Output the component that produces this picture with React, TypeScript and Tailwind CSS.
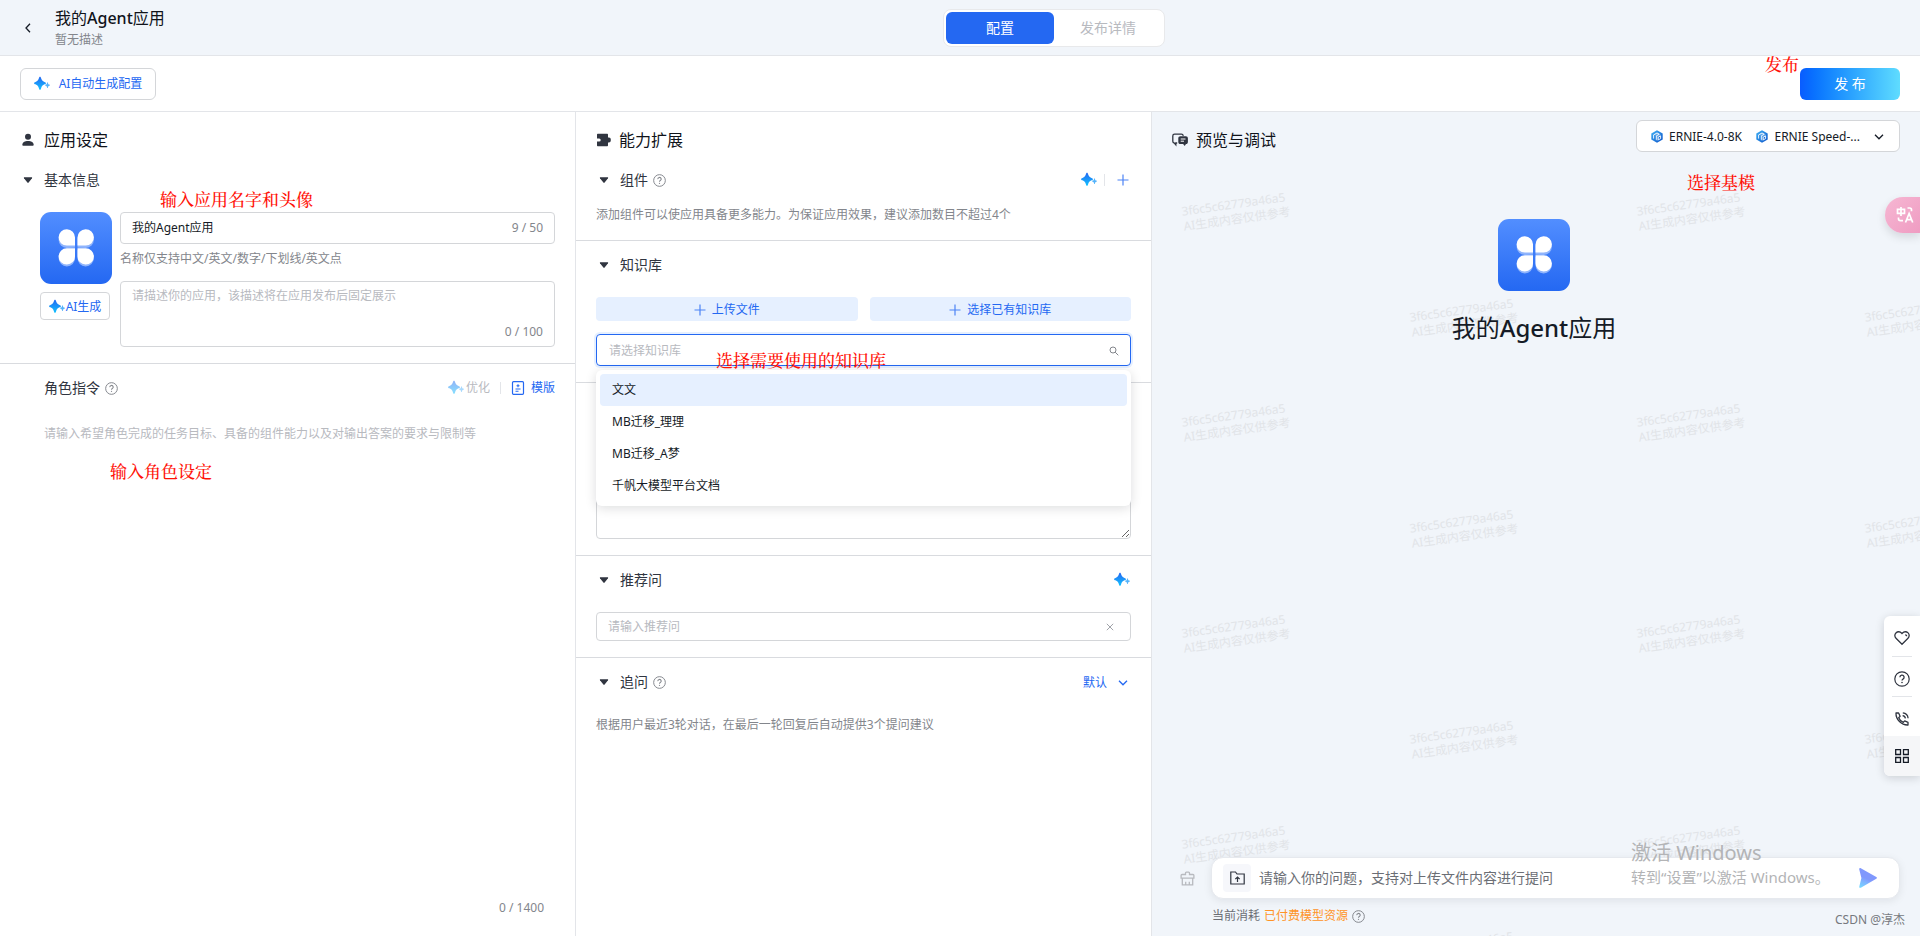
import React from "react";

function Sparkle({ className = "" }: { className?: string }) {
  return (
    <svg viewBox="0 0 16 16" className={"size-4 shrink-0 " + className} aria-hidden="true">
      <defs>
        <linearGradient id="spark" x1="0" y1="0" x2="0" y2="1">
          <stop offset="0" stopColor="#2468f2" />
          <stop offset="1" stopColor="#12c2ff" />
        </linearGradient>
      </defs>
      <path
        d="M6 .8c.6 0 .8.500 1.100 1.500.7 2.100 1.400 2.900 3.400 3.700.8.3 1.400.6 1.400 1.200s-.6.800-1.400 1.100c-2 .8-2.700 1.700-3.400 3.900-.3 1-.5 1.600-1.100 1.600s-.8-.6-1.100-1.600C4.200 10 3.500 9.100 1.500 8.300.7 8 .1 7.800.1 7.200S.7 6.300 1.500 6c2-.8 2.700-1.600 3.400-3.700C5.200 1.300 5.400.8 6 .8z"
        fill="url(#spark)"
      />
      <path
        d="M13.500 6.300c.3 0 .4.400.5.9.2.8.5 1.100 1.200 1.400.5.200.8.3.8.600s-.3.400-.8.600c-.7.300-1 .6-1.200 1.400-.1.500-.2.900-.5.900s-.4-.4-.5-.9c-.2-.8-.5-1.100-1.200-1.400-.5-.2-.8-.3-.8-.6s.3-.4.8-.6c.7-.3 1-.6 1.200-1.400.1-.5.2-.9.5-.9z"
        fill="#55b4fb"
      />
    </svg>
  );
}

function Help({ className = "size-3 text-[#83868c]" }: { className?: string }) {
  return (
    <svg viewBox="0 0 16 16" className={"shrink-0 " + className} fill="none" stroke="currentColor" aria-hidden="true">
      <circle cx="8" cy="8" r="7.2" strokeWidth="1.2" />
      <path d="M5.900 6.300a2.100 2.100 0 1 1 3.100 1.800c-.7.400-1 .8-1 1.500" strokeWidth="1.300" />
      <circle cx="8" cy="11.500" r=".8" fill="currentColor" stroke="none" />
    </svg>
  );
}

function Caret() {
  return (
    <svg viewBox="0 0 10 8" className="h-2 w-2.5 shrink-0" aria-hidden="true">
      <path d="M1.400 1.300h7.200c.5 0 .7.500.4.900L5.600 6.600a.8.8 0 0 1-1.200 0L1 2.200c-.3-.4-.1-.9.4-.9z" fill="#303540" />
    </svg>
  );
}

function Chevron({ className }: { className: string }) {
  return (
    <svg viewBox="0 0 10 6" className={"shrink-0 " + className} fill="none" stroke="currentColor" strokeWidth="1.300" aria-hidden="true">
      <path d="M1 .8l4 4 4-4" />
    </svg>
  );
}

function Plus({ className }: { className: string }) {
  return (
    <svg viewBox="0 0 12 12" className={"shrink-0 " + className} stroke="#4d84f5" strokeWidth="1.200" aria-hidden="true">
      <path d="M6 .5v11M.5 6h11" />
    </svg>
  );
}

function Clover({ id }: { id: string }) {
  return (
    <svg viewBox="0 0 72 72" className="size-[72px] shrink-0" role="img" aria-label="Agent">
      <defs>
        <linearGradient id={id} x1="0" y1="0" x2="0" y2="1">
          <stop offset="0" stopColor="#528eff" />
          <stop offset="1" stopColor="#2468f2" />
        </linearGradient>
      </defs>
      <rect width="72" height="72" rx="11" fill={`url(#${id})`} />
      <g fill="#8fb4fc" transform="translate(0 1.800)">
        <path d="M35 34V26a8.200 8.200 0 1 0-8.200 8.200z" />
        <path d="M37.500 34V26a8.200 8.200 0 1 1 8.200 8.200z" />
        <path d="M35 36.200v8a8.200 8.200 0 1 1-8.200-8z" />
        <path d="M37.500 36.200v8a8.200 8.200 0 1 0 8.200-8z" />
      </g>
      <g fill="#fff">
        <path d="M35 33.600V25.600a8.200 8.200 0 1 0-8.200 8z" />
        <path d="M37.500 33.600V25.600a8.200 8.200 0 1 1 8.200 8z" />
        <path d="M35 36.200v8a8.200 8.200 0 1 1-8.200-8z" />
        <path d="M37.500 36.200v8a8.200 8.200 0 1 0 8.200-8z" />
      </g>
    </svg>
  );
}

function ModelLogo() {
  return (
    <svg viewBox="0 0 12 13" className="h-[13px] w-3 shrink-0" aria-hidden="true">
      <defs>
        <linearGradient id="model" x1="0" y1="0" x2="1" y2="1">
          <stop offset="0" stopColor="#3fb2f5" />
          <stop offset="1" stopColor="#0b52c9" />
        </linearGradient>
      </defs>
      <path d="M6 .3l5.700 3.200v6L6 12.700.3 9.500v-6z" fill="url(#model)" />
      <path d="M6 2.400l3.700 2.100v1L7.200 6.900v3.600L6 11.100 5.200 10.600V6L2.500 4.500z" fill="#fff" opacity=".25" />
      <path d="M2.600 8.600V4.900L6 3l2.300 1.200L5.300 5.900v3.900M9.600 5.900v2.700L7.200 9.900V7.200z" fill="none" stroke="#fff" strokeWidth=".9" />
    </svg>
  );
}

const note = "pointer-events-none absolute z-20 whitespace-nowrap text-[17px] font-medium leading-6 text-[#ff1208] [font-family:'Liberation_Serif','Noto_Serif_CJK_SC','Noto_Sans_CJK_SC',serif]";
const sectionTitle = "text-sm text-[#303540]";

function Watermarks() {
  return (
    <div className="pointer-events-none absolute inset-0 overflow-hidden select-none" aria-hidden="true">
      <div className="grid auto-rows-[211px] grid-cols-[455px_455px] pt-[84px] pl-[30px]">
        {[0, 1, 2, 3, 4, 5, 6, 7].map((cell) => (
          <div key={cell} className="flex flex-col justify-between pb-[75px]">
            {["", "ml-[228px]"].map((shift) => (
              <div key={shift} className={"w-28 origin-center -rotate-8 text-xs leading-[15px] whitespace-nowrap text-[#e1e4e8] " + shift}>
                3f6c5c62779a46a5
                <br />
                AI生成内容仅供参考
              </div>
            ))}
          </div>
        ))}
      </div>
    </div>
  );
}

function SettingsColumn() {
  return (
    <section className="flex w-[30%] flex-col border-r border-[#e3e5e9]">
      <div className="border-b border-[#d9dbdf] px-5 py-4">
        <h2 className="flex h-6 items-center gap-2 text-base text-[#10131a]">
          <svg viewBox="0 0 16 16" className="size-4" fill="#303540" aria-hidden="true">
            <circle cx="8" cy="4.700" r="3" />
            <path d="M2.300 12.800C2.300 10.300 4.800 9 8 9s5.700 1.300 5.700 3.800c0 .6-.3.900-.9.900H3.200c-.6 0-.9-.3-.9-.9z" />
          </svg>
          应用设定
        </h2>
        <div className="relative mt-4 flex h-6 items-center gap-[11px] pl-[3px]">
          <Caret />
          <h3 className={sectionTitle}>基本信息</h3>
          <span className={note + " top-[21px] left-[140px]"}>输入应用名字和头像</span>
        </div>
        <div className="mt-5 flex gap-2 pl-5">
          <div>
            <Clover id="cloverA" />
            <button className="mt-2 flex h-7 w-[70px] items-center justify-center gap-px rounded border border-[#d4d6d9] bg-white pt-px text-xs text-[#2468f2]">
              <Sparkle />
              <span>AI生成</span>
            </button>
          </div>
          <div className="min-w-0 flex-1">
            <div className="flex h-8 items-center rounded border border-[#d4d6d9] px-[11px] text-xs">
              <input aria-label="应用名字" defaultValue="我的Agent应用" className="min-w-0 flex-1 text-[#151b26] outline-none" />
              <span className="text-[#83868c]">9 / 50</span>
            </div>
            <p className="mt-[5px] h-5 text-xs leading-5 text-[#83868c]">名称仅支持中文/英文/数字/下划线/英文点</p>
            <div className="mt-3 flex h-[66px] flex-col rounded border border-[#d4d6d9] px-[11px] py-1 text-xs">
              <textarea
                aria-label="应用描述"
                placeholder="请描述你的应用，该描述将在应用发布后固定展示"
                className="min-h-0 flex-1 resize-none leading-5 outline-none placeholder:text-[#b8babf]"
              />
              <span className="text-right leading-5 text-[#83868c]">0 / 100</span>
            </div>
          </div>
        </div>
      </div>
      <div className="relative flex flex-1 flex-col px-5 pt-3 pb-4">
        <div className="flex h-6 items-center pl-6">
          <h3 className={sectionTitle}>角色指令</h3>
          <Help className="ml-[5px] size-[13px] text-[#83868c]" />
          <button disabled className="ml-auto flex items-center gap-0.5 text-xs text-[#b8babf]">
            <Sparkle className="opacity-50" />
            优化
          </button>
          <span className="mx-[10px] h-3 w-px bg-[#e3e5e9]" />
          <button className="flex items-center gap-[6px] text-xs text-[#2468f2]">
            <svg viewBox="0 0 14 14" className="size-3.5" fill="none" stroke="#2468f2" aria-hidden="true">
              <rect x="1.500" y=".7" width="11" height="12.600" rx="1" strokeWidth="1.200" />
              <path d="M7 3.200v3M5.500 4.700h3M4.500 8h5M4.500 10.300h3" strokeWidth="1.100" />
            </svg>
            模版
          </button>
        </div>
        <textarea
          aria-label="角色指令"
          placeholder="请输入希望角色完成的任务目标、具备的组件能力以及对输出答案的要求与限制等"
          className="mt-[22px] ml-6 flex-1 resize-none text-xs leading-6 outline-none placeholder:text-[#b8babf]"
        />
        <span className={note + " top-[97px] left-[110px]"}>输入角色设定</span>
        <span className="pr-[11px] text-right text-xs leading-6 text-[#83868c]">0 / 1400</span>
      </div>
    </section>
  );
}

function KnowledgeSelect() {
  const options = ["文文", "MB迁移_理理", "MB迁移_A梦", "千帆大模型平台文档"];
  return (
    <div className="relative mt-[13px]">
      <div className="flex h-8 items-center rounded border border-[#2468f2] pt-px pr-[11px] pl-3 ring-2 ring-[#e6f0ff]">
        <input
          role="combobox"
          aria-expanded="true"
          aria-controls="kb-list"
          aria-label="知识库"
          placeholder="请选择知识库"
          className="min-w-0 flex-1 text-xs outline-none placeholder:text-[#b8babf]"
        />
        <svg viewBox="0 0 10 10" className="size-2.5" fill="none" stroke="#83868c" aria-hidden="true">
          <circle cx="4" cy="4" r="3" />
          <path d="M6.200 6.200L9.300 9.300" />
        </svg>
      </div>
      <span className={note + " top-4 left-[120px]"}>选择需要使用的知识库</span>
      <ul
        id="kb-list"
        role="listbox"
        className="absolute inset-x-0 top-full z-10 mt-1 rounded-md bg-white p-1 shadow-[0_2px_12px_rgba(7,12,20,0.14)]"
      >
        {options.map((name, i) => (
          <li
            key={name}
            role="option"
            aria-selected={i === 0}
            className={"flex h-8 items-center rounded px-3 text-xs text-[#151b26] " + (i === 0 ? "bg-[#e6f0ff]" : "")}
          >
            {name}
          </li>
        ))}
      </ul>
    </div>
  );
}

function AbilityColumn() {
  const add = "flex h-6 flex-1 items-center justify-center gap-[6px] rounded bg-[#e6f0ff] pt-px text-xs text-[#2468f2]";
  return (
    <section className="w-[30%] border-r border-[#e3e5e9]">
      <div className="border-b border-[#d9dbdf] px-5 py-4">
        <h2 className="flex h-6 items-center gap-2 text-base text-[#10131a]">
          <svg viewBox="0 0 15 14" className="h-3.5 w-[15px]" aria-hidden="true">
            <path
              d="M2 .8h9c.6 0 1 .4 1 1v2.700h.9A1.900 1.900 0 0 1 14.800 6.500v1A1.900 1.900 0 0 1 12.900 9.400H12v2.800c0 .6-.4 1-1 1H2c-.6 0-1-.4-1-1V8.500h2.200a1.500 1.500 0 0 0 0-3H1V1.800c0-.6.4-1 1-1z"
              fill="#303540"
            />
          </svg>
          能力扩展
        </h2>
        <div className="mt-4 flex h-6 items-center pl-[3px]">
          <Caret />
          <h3 className={sectionTitle + " mr-[5px] ml-[11px]"}>组件</h3>
          <Help className="size-[13px] text-[#83868c]" />
          <button aria-label="AI" className="ml-auto">
            <Sparkle />
          </button>
          <span className="mr-3 ml-[7px] h-3 w-px bg-[#e3e5e9]" />
          <button aria-label="添加组件" className="mr-0.5">
            <Plus className="size-3" />
          </button>
        </div>
        <p className="mt-[13px] h-[19px] text-xs leading-5 text-[#83868c]">添加组件可以使应用具备更多能力。为保证应用效果，建议添加数目不超过4个</p>
      </div>
      <div className="border-b border-[#d9dbdf] px-5 pt-3 pb-4">
        <div className="flex h-6 items-center gap-[11px] pl-[3px]">
          <Caret />
          <h3 className={sectionTitle}>知识库</h3>
        </div>
        <div className="mt-5 flex gap-3">
          <button className={add}>
            <Plus className="size-3" />
            上传文件
          </button>
          <button className={add}>
            <Plus className="size-3" />
            选择已有知识库
          </button>
        </div>
        <KnowledgeSelect />
      </div>
      <div className="border-b border-[#d9dbdf] px-5 pt-14 pb-4">
        <textarea aria-label="开场白" className="block h-[100px] w-full resize-y rounded border border-[#d4d6d9] px-[11px] py-1 text-xs outline-none" />
      </div>
      <div className="border-b border-[#d9dbdf] px-5 pt-3 pb-4">
        <div className="flex h-6 items-center gap-[11px] pl-[3px]">
          <Caret />
          <h3 className={sectionTitle}>推荐问</h3>
          <button aria-label="AI" className="mr-px ml-auto">
            <Sparkle />
          </button>
        </div>
        <div className="mt-5 flex h-[29px] items-center rounded border border-[#d4d6d9] pr-4 pl-[11px]">
          <input aria-label="推荐问" placeholder="请输入推荐问" className="min-w-0 flex-1 text-xs outline-none placeholder:text-[#b8babf]" />
          <button aria-label="清除">
            <svg viewBox="0 0 8 8" className="size-2" stroke="#a0a3a9" aria-hidden="true">
              <path d="M.8.8l6.400 6.400M7.200.8L.8 7.200" />
            </svg>
          </button>
        </div>
      </div>
      <div className="px-5 pt-3">
        <div className="flex h-6 items-center pl-[3px]">
          <Caret />
          <h3 className={sectionTitle + " mr-[5px] ml-[11px]"}>追问</h3>
          <Help className="size-[13px] text-[#83868c]" />
          <button className="mr-[3px] ml-auto flex items-center gap-[11px] pt-px text-xs text-[#2468f2]">
            默认
            <Chevron className="h-[6px] w-2.5" />
          </button>
        </div>
        <p className="mt-[21px] h-5 text-xs leading-5 text-[#83868c]">根据用户最近3轮对话，在最后一轮回复后自动提供3个提问建议</p>
      </div>
    </section>
  );
}

function PreviewColumn() {
  return (
    <section className="relative flex min-w-0 flex-1 flex-col bg-[#f1f5fa] px-5">
      <Watermarks />
      <div className="relative flex items-start justify-between pt-2">
        <h2 className="mt-2 flex h-6 items-center gap-2 text-base text-[#10131a]">
          <svg viewBox="0 0 16 14" className="h-3.5 w-4" aria-hidden="true">
            <path d="M11.300 2.800c-.2-1-.8-1.600-1.900-1.600H2.600C1.500 1.200.8 1.900.8 3v5.200c0 1.100.6 1.700 1.500 1.800l1.500 1.800V10h1.400" fill="none" stroke="#303540" strokeWidth="1.300" />
            <path d="M8.400 3.200h5.400c1.300 0 2.100.8 2.100 2.100v3.600c0 1.200-.7 2-1.900 2.100l-1.300 2-1.600-2H8.400c-1.300 0-2.100-.8-2.100-2.100V5.300c0-1.300.8-2.100 2.100-2.100z" fill="#303540" />
            <path d="M8.700 6h4.800M8.700 8.200h3.300" stroke="#fff" />
          </svg>
          预览与调试
        </h2>
        <button className="flex h-8 w-[264px] items-center rounded-md border border-[#d4d6d9] bg-white pt-px pr-[15px] pl-[14px] text-xs text-[#151b26]">
          <ModelLogo />
          <span className="mr-auto ml-[6px]">ERNIE-4.0-8K</span>
          <ModelLogo />
          <span className="mr-[14px] ml-[6px]">ERNIE Speed-...</span>
          <Chevron className="h-[6px] w-2.5" />
        </button>
        <span className={note + " top-[60px] right-[145px]"}>选择基模</span>
        <span className={note + " right-[101px] -top-[58px]"}>发布</span>
      </div>
      <div className="relative mt-[67px] flex flex-col items-center gap-[21px] pr-1">
        <Clover id="cloverB" />
        <p className="text-2xl leading-8 text-[#151b26]">
          我的<span className="font-medium">Agent</span>应用
        </p>
      </div>
      <div className="relative mt-auto flex items-center">
        <button aria-label="清空对话" className="mr-4 ml-2">
          <svg viewBox="0 0 15 15" className="size-[15px]" fill="none" stroke="#b8babf" strokeWidth="1.300" aria-hidden="true">
            <path d="M5.500 3.500V2c0-.6.3-.9.9-.9h2.200c.6 0 .9.300.9.900v1.500H13c.6 0 .9.300.9.900v2.700H1.100V4.400c0-.6.300-.9.900-.9zM2.300 7.100v6.700h10.400V7.100M5.700 13.500v-2.700M9.300 13.500v-2.700" />
          </svg>
        </button>
        <div className="flex h-[42px] flex-1 items-center rounded-xl border border-[#e6e9ee] bg-white pr-[22px] pl-[11px] shadow-[0_2px_8px_rgba(7,12,20,0.08)]">
          <button aria-label="上传文件" className="flex size-7 items-center justify-center rounded bg-[#f6f7fb]">
            <svg viewBox="0 0 15 14" className="h-3.5 w-[15px]" fill="none" stroke="#303540" strokeWidth="1.200" aria-hidden="true">
              <path d="M.8 1h4.700l1.500 2h7.200v10H.8zM7.500 11V6.200M5.300 8.200l2.200-2.200 2.200 2.200" />
            </svg>
          </button>
          <input
            aria-label="问题"
            placeholder="请输入你的问题，支持对上传文件内容进行提问"
            className="ml-2 min-w-0 flex-1 text-sm outline-none placeholder:text-[#6b6e75]"
          />
          <button aria-label="发送">
            <svg viewBox="0 0 18 20" className="h-5 w-[18px]" aria-hidden="true">
              <defs>
                <linearGradient id="send" x1="0" y1="1" x2=".4" y2="0">
                  <stop offset="0" stopColor="#74dcff" />
                  <stop offset=".35" stopColor="#7fb4ff" />
                  <stop offset=".55" stopColor="#8098fd" />
                </linearGradient>
              </defs>
              <path d="M.2 1.300C0 .3.900-.2 1.800.3l15.500 8.600c.9.500.9 1.400 0 1.900L1.800 19.700c-.9.500-1.700-.2-1.500-1.100L2.400 10z" fill="url(#send)" />
            </svg>
          </button>
        </div>
        <div className="pointer-events-none absolute bottom-3 left-[459px] whitespace-nowrap text-[#b3b4b6]">
          <div className="text-xl leading-7">激活 Windows</div>
          <div className="text-[15px] leading-5">转到“设置”以激活 Windows。</div>
        </div>
      </div>
      <div className="relative mt-[5px] mb-2 flex h-6 items-center gap-1 pl-10 text-xs text-[#6b6e75]">
        当前消耗 <a href="#resource" className="text-[#ff9326]">已付费模型资源</a>
        <Help className="size-[13px] text-[#83868c]" />
        <span className="absolute top-2 -right-[5px] text-xs text-[#76797e]">CSDN @淳杰</span>
      </div>
    </section>
  );
}

function FloatingTools() {
  const cell = "flex h-10 w-full items-center justify-center";
  return (
    <>
      <button aria-label="翻译" className="absolute top-[197px] right-0 z-30 flex h-9 w-[35px] items-center justify-center rounded-l-full bg-linear-to-br from-[#f6b7d3] to-[#ef9cc2] pl-1 text-white shadow-[0_4px_10px_rgba(7,12,20,0.12)]">
        <svg viewBox="0 0 18 18" className="size-[18px]" fill="none" stroke="#fff" strokeWidth="1.700" aria-hidden="true">
          <path d="M1.500 3.300h7v4h-7zM5 1v9M11.500 2h2.300c1 0 1.700.6 1.700 1.700v1.500M2.500 11.500v1.300c0 1.200.7 1.900 1.900 1.900H7M9.500 16.500l3.600-9 3.600 9M10.700 13.600h4.800" />
        </svg>
      </button>
      <nav className="absolute top-[616px] right-0 z-30 w-9 overflow-hidden rounded-l-md bg-white shadow-[0_2px_10px_rgba(7,12,20,0.16)]">
        <div className="mx-2 border-b border-[#e3e5e9]">
          <button aria-label="收藏" className={cell}>
            <svg viewBox="0 0 16 16" className="mt-1 size-4" fill="none" stroke="#303540" strokeWidth="1.300" aria-hidden="true">
              <path d="M8 14.300L2 8.300C.5 6.800.4 4.300 1.900 2.900c1.700-1.600 4.200-1.500 5.600.1L8 3.500l.5-.5c1.400-1.600 3.900-1.700 5.600-.1 1.500 1.400 1.400 3.900-.1 5.400zM11.200 4.800c.9 0 1.500.6 1.500 1.500" />
            </svg>
          </button>
        </div>
        <div className="mx-2 border-b border-[#e3e5e9]">
          <button aria-label="帮助" className="flex h-[39px] w-full items-center justify-center">
            <Help className="mt-1 size-4 text-[#303540]" />
          </button>
        </div>
        <button aria-label="电话" className="flex h-[39px] w-full items-center justify-center">
          <svg viewBox="0 0 16 16" className="mt-1 size-4" fill="none" stroke="#303540" strokeWidth="1.300" strokeLinejoin="round" aria-hidden="true">
            <path d="M2 2h2.600l1.500 3.300-1.400 1.400c.8 1.900 2.500 3.700 4.600 4.600l1.400-1.400L14 11.400V14C7.500 14.300 1.700 8.500 2 2zM8.600 4.600c1.600.2 2.600 1.200 2.800 2.800M8.800 1.900c3 .3 5 2.300 5.300 5.300" />
          </svg>
        </button>
        <button aria-label="更多" className={cell + " bg-[#f5f6f8]"}>
          <svg viewBox="0 0 14 14" className="size-3.5" fill="none" stroke="#151b26" strokeWidth="1.300" aria-hidden="true">
            <path d="M.7.7h4.800v4.800H.7zM8.500.7h4.800v4.800H8.500zM.7 8.500h4.800v4.800H.7zM8.500 8.500h4.800v4.800H8.500z" />
          </svg>
        </button>
      </nav>
    </>
  );
}

export default function App() {
  return (
    <div className="relative flex min-h-screen flex-col bg-white [font-family:'Noto_Sans','Noto_Sans_CJK_SC',sans-serif]">
      <header className="grid h-14 grid-cols-[59fr_61fr] items-center border-b border-[#e3e5e9] bg-[#f1f5fa]">
        <div className="flex items-center">
          <button aria-label="返回" className="ml-[25px] w-[30px]">
            <svg viewBox="0 0 6 10" className="h-2.5 w-[6px]" fill="none" stroke="#151b26" strokeWidth="1.300" aria-hidden="true">
              <path d="M5 .8L1 5l4 4.200" />
            </svg>
          </button>
          <div className="pt-px">
            <h1 className="text-base leading-6 text-[#10131a]">
              我的<span className="font-medium">Agent</span>应用
            </h1>
            <p className="text-xs leading-5 text-[#83868c]">暂无描述</p>
          </div>
        </div>
        <div className="-ml-px flex h-[38px] w-[222px] rounded-lg border border-[#e8e9eb] bg-white p-0.5 text-sm">
          <button className="w-[108px] rounded-md bg-[#2468f2] text-white">配置</button>
          <button className="flex-1 text-[#b8babf]">发布详情</button>
        </div>
      </header>
      <div className="flex h-14 items-center justify-between border-b border-[#e3e5e9] px-5">
        <button className="flex h-8 w-[136px] items-center justify-center gap-[9px] rounded-md border border-[#d4d6d9] pt-px text-xs text-[#2468f2]">
          <Sparkle />
          AI自动生成配置
        </button>
        <button className="h-8 w-[100px] rounded-md bg-linear-to-r from-[#0a5cff] to-[#5fdcff] text-sm text-white">发 布</button>
      </div>
      <main className="flex flex-1">
        <SettingsColumn />
        <AbilityColumn />
        <PreviewColumn />
      </main>
      <FloatingTools />
    </div>
  );
}
